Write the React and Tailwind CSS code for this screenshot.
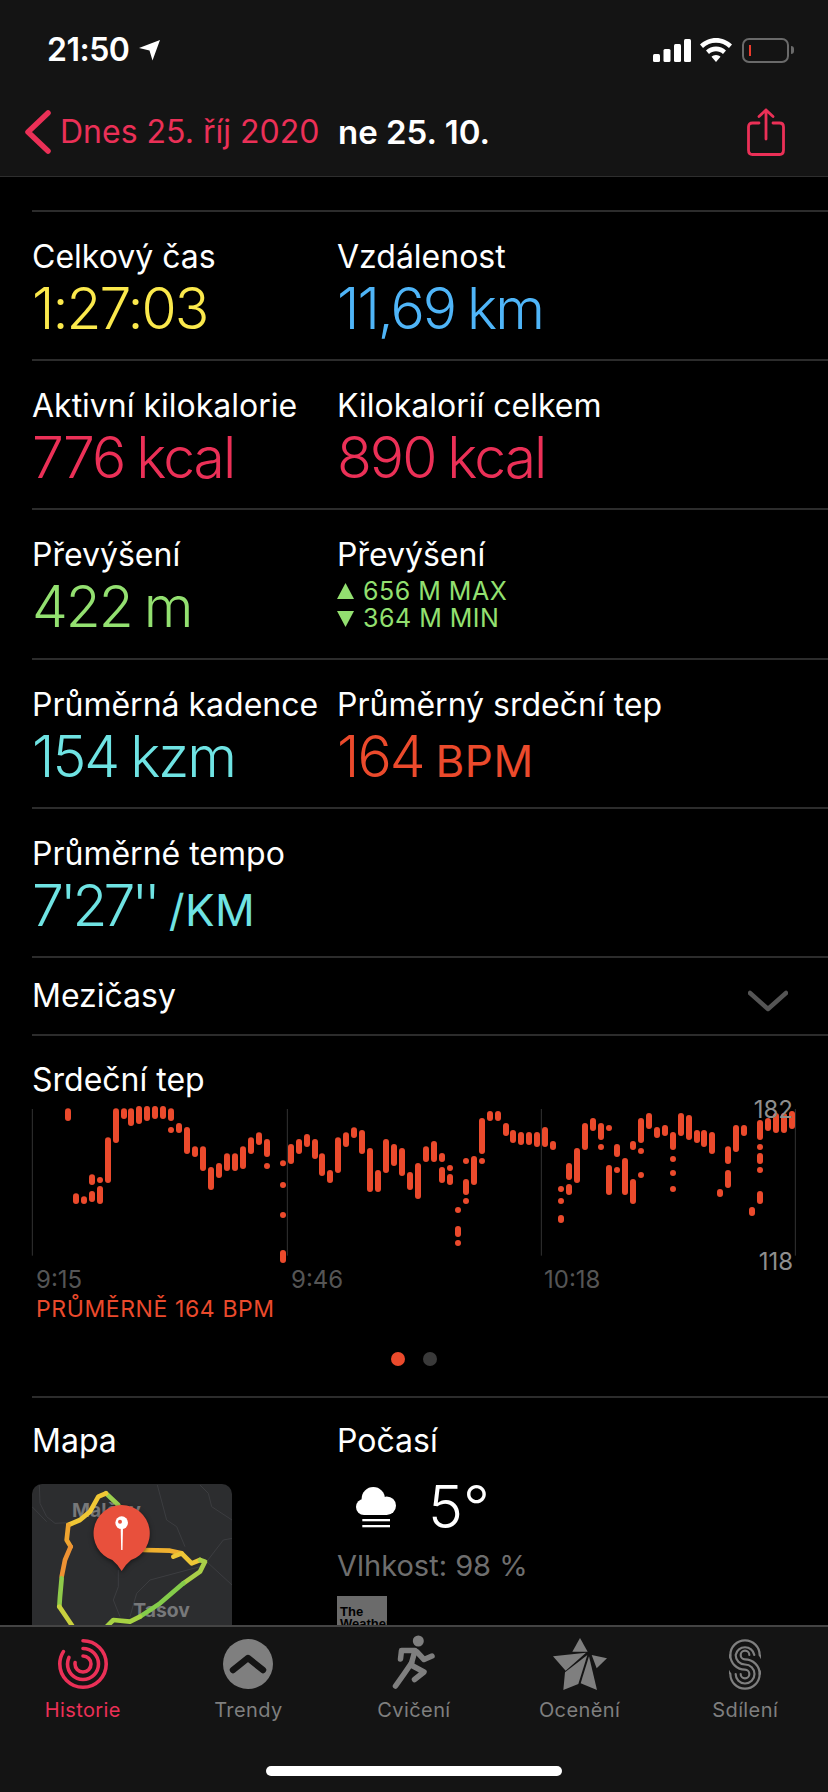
import React from 'react';

const FONT = "font-['Inter','Liberation_Sans',sans-serif]";

// heart rate bars, in 3x coordinates of the page: [x, top, bottom]
const bars = [
  [204,148,186],[228,403,435],[252,412,435],[276,346,378],[276,396,429],[300,354,372],[300,381,435],
  [324,235,372],[348,148,252],[372,148,180],[393,148,201],[417,141,195],[441,141,186],[465,141,180],
  [489,141,180],[513,148,186],[513,204,222],[537,192,222],[561,204,285],[585,262,294],[609,262,336],
  [633,324,393],[657,312,357],[681,283,336],[705,283,336],[729,262,330],[753,235,285],[777,220,258],
  [801,240,294],[801,312,330],[849,304,322],[849,369,387],[849,459,477],[849,573,612],[873,255,315],
  [897,240,285],[921,225,264],[945,240,300],[966,283,351],[990,333,372],[1014,235,342],[1038,220,264],
  [1062,205,237],[1086,213,285],[1110,267,399],[1134,333,399],[1158,240,342],[1182,255,321],[1206,267,351],
  [1230,339,393],
  [1254,312,420],[1278,262,309],[1302,246,309],[1326,282,309],[1326,324,372],[1350,318,336],[1350,345,378],
  [1374,444,462],[1374,501,534],[1374,543,561],[1398,297,315],[1398,360,408],[1398,417,435],[1422,291,378],
  [1446,177,285],[1446,297,315],[1470,156,186],[1494,156,186],[1518,192,231],[1539,213,252],[1563,219,258],
  [1587,219,258],[1611,219,264],[1635,204,264],[1659,246,273],[1683,381,399],[1683,417,435],[1683,468,492],
  [1707,312,363],[1707,375,408],[1731,267,372],[1755,192,273],[1779,177,216],[1803,192,243],[1803,255,273],
  [1827,198,216],[1827,318,408],[1851,255,294],[1851,324,342],[1875,297,408],[1899,246,273],[1899,360,435],
  [1923,177,252],[1923,267,285],[1923,339,357],[1947,162,210],[1971,204,237],[1995,198,231],[2019,219,273],
  [2019,291,309],[2019,333,351],[2019,381,399],[2043,162,231],[2067,168,243],[2091,213,252],[2112,213,264],
  [2136,219,285],[2160,390,414],[2184,262,315],[2184,333,387],[2208,198,279],[2232,198,231],[2256,444,471],
  [2280,183,243],[2280,255,273],[2280,282,315],[2280,324,342],[2280,396,435],[2304,177,216],[2328,162,222],
  [2352,162,222],[2376,156,210],
];

const HeartChart = () => (
  <svg viewBox="0 120 2484 495" className="block w-[828px] h-[165px]">
    {[97, 862, 1624, 2386].map((x) => (
      <line key={x} x1={x} x2={x} y1="150" y2="590" stroke="#333" strokeWidth="3" />
    ))}
    {bars.map(([x, top, bottom], i) => (
      <rect key={i} x={x - 9} y={top} width="18" height={bottom - top} rx="9" fill="#eb4a2c" />
    ))}
  </svg>
);

const Row = ({ children, tall }) => (
  <div className={`flex ml-8 border-t-2 border-[#2c2c2c] ${tall ? 'h-[150px]' : 'h-[149px]'}`}>{children}</div>
);

const Stat = ({ label, children, className }) => (
  <div className="w-[305px] pt-[26px] shrink-0">
    <div className="text-[32px] leading-[38px] text-white whitespace-nowrap">{label}</div>
    <div className={`mt-[3px] h-[60px] flex items-baseline text-[57px] leading-[60px] font-light tracking-[-2px] [word-spacing:-2px] whitespace-nowrap ${className}`}>
      {children}
    </div>
  </div>
);

const Unit = ({ children }) => <span className="ml-3 text-[44px] font-normal tracking-[0.5px]">{children}</span>;

const Triangle = ({ down }) => (
  <svg viewBox="0 0 17 17" className="w-[17px] h-[17px] mr-[9px] fill-[#93e070]">
    <path d={down ? 'M0 1h17L8.5 17z' : 'M8.5 0L17 16H0z'} />
  </svg>
);

const MapThumb = () => (
  <div className="relative mt-[24px] ml-8 w-[200px] h-[200px] rounded-[10px] bg-[#2c2d2f] overflow-hidden">
    <svg viewBox="96 282 600 600" className="w-full h-full">
      <g fill="none" stroke="#3c3d40" strokeWidth="3">
        <path d="M118 285L120 340L140 380L165 400L205 398" />
        <path d="M96 350L140 395" />
        <path d="M472 285L500 390L530 410L555 470" />
        <path d="M600 285L625 310L635 350L696 390" />
        <path d="M696 445L670 450L620 515L696 585" />
        <path d="M355 540L355 590L340 630L360 680" />
        <path d="M600 530L450 570L410 610L390 680" />
      </g>
      <g fontFamily="Inter" fontWeight="700" fontSize="58" fill="#77787a">
        <text x="216" y="382">Malčov</text>
        <text x="400" y="680">Tasov</text>
      </g>
      <g fill="none" strokeWidth="14" strokeLinecap="round" strokeLinejoin="round">
        <path d="M318 310L355 345" stroke="#9ccf4e" />
        <path d="M318 310L295 320L270 365L240 390L205 405" stroke="#f0c735" />
        <path d="M205 405L200 450L212 470" stroke="#efa42f" />
        <path d="M212 470L195 510L185 560" stroke="#ee9233" />
        <path d="M185 565L180 620L178 650" stroke="#8fca4a" />
        <path d="M178 650L205 690L225 720" stroke="#c9d13e" />
        <path d="M430 480L510 482L545 490" stroke="#efb02f" />
        <path d="M520 500L545 490L575 520L600 510" stroke="#eec636" />
        <path d="M600 510L615 515L600 545L550 580" stroke="#a9cf48" />
        <path d="M550 580L480 640L420 680" stroke="#84cc4a" />
        <path d="M420 680L390 695L340 690L310 720" stroke="#a6d243" />
      </g>
      <g className="drop-shadow-[0_5px_8px_rgba(0,0,0,0.5)]">
        <path d="M365 345a85 85 0 0 1 28 165Q378 522 365 543Q352 522 337 510A85 85 0 0 1 365 345z" fill="#e8503c" />
        <path d="M362 410h7l-1.500 70h-4z" fill="#fff" />
        <circle cx="365" cy="398" r="19" fill="#fff" />
        <circle cx="360" cy="395" r="6" fill="#e8503c" />
      </g>
    </svg>
  </div>
);

const Weather = () => (
  <div className="flex-1 pl-[1px]">
    <div className="flex items-center h-[60px] mt-[17px]">
      <svg viewBox="0 0 40 41" className="ml-[19px] w-10 h-[41px] fill-white">
        <circle cx="17.300" cy="11.700" r="11.700" />
        <circle cx="30.700" cy="18.700" r="9.300" />
        <circle cx="8" cy="20" r="8" />
        <rect x="8" y="16" width="23" height="12" />
        <rect x="6.300" y="32" width="27.700" height="2.300" />
        <rect x="6.300" y="38" width="27.700" height="2.300" />
      </svg>
      <span className="ml-[32px] text-[59px] leading-[60px] font-light text-white">5°</span>
    </div>
    <div className="mt-[12px] text-[29px] leading-[34px] text-[#6e6e6e]">Vlhkost: 98 %</div>
    <div className="mt-[13px] w-[50px] h-[60px] bg-[#6b6b6b] px-[3px] pt-[10px] font-['Liberation_Sans',sans-serif] text-[13px] leading-[12px] font-bold text-black">
      The Weather
    </div>
  </div>
);

const RunIcon = () => (
  <svg viewBox="0 0 80 70" className="w-[80px] h-[70px]">
    <circle cx="44.300" cy="12" r="5.500" fill="#7f7f7f" />
    <g fill="none" stroke="#7f7f7f" strokeWidth="5.500" strokeLinecap="round" strokeLinejoin="round">
      <path d="M26.500 30L27.500 21.500H41L37 36L50 43L40.500 50.500" />
      <path d="M37.500 34L30 45L21.500 57" />
      <path d="M43 23L50 30.500L58 27" />
    </g>
  </svg>
);

const Tab = ({ label, active, children }) => (
  <div className="flex flex-col items-center">
    <div className="h-[70px] flex items-center justify-center">{children}</div>
    <div className={`mt-[-1px] text-[20px] leading-[24px] tracking-[0.4px] ${active ? 'text-[#eb3057]' : 'text-[#7f7f7f]'}`}>
      {label}
    </div>
  </div>
);

const RingsIcon = () => (
  <svg viewBox="0 0 50 50" className="w-[50px] h-[50px] -rotate-90" fill="none" stroke="#eb3057" strokeWidth="3.600" strokeLinecap="round">
    <circle cx="25" cy="25" r="23.200" pathLength="100" strokeDasharray="84 100" />
    <circle cx="25" cy="25" r="15.500" pathLength="100" strokeDasharray="82 100" />
    <circle cx="25" cy="25" r="8" pathLength="100" strokeDasharray="78 100" />
  </svg>
);

const TrendIcon = () => (
  <svg viewBox="0 0 50 50" className="w-[50px] h-[50px]">
    <circle cx="25" cy="25" r="25" fill="#7f7f7f" />
    <path d="M10 31L25 19L40 31" fill="none" stroke="#141414" strokeWidth="6.500" strokeLinecap="round" strokeLinejoin="round" />
  </svg>
);

const StarIcon = () => (
  <svg viewBox="414 57 162 156" className="w-[54px] h-[52px] fill-[#7f7f7f]">
    <polygon points="495,57 518,98 472,98" />
    <polygon points="414,112 513,101 452,155" />
    <polygon points="445,213 450,160 517,108 490,195" />
    <polygon points="522,112 546,213 497,193" />
    <polygon points="530,108 576,118 545,148" />
  </svg>
);

const ShareRingIcon = () => (
  <svg viewBox="942 55 96 153" className="w-8 h-[51px]" fill="none" stroke="#7f7f7f" strokeWidth="6.500" strokeLinecap="round">
    <path d="M1034 160A44 44 0 0 0 1034 103A44 44 0 0 0 990 59A44 44 0 0 0 990 147A13 13 0 0 1 990 173A13 13 0 0 1 977 160" />
    <path d="M1018 103A28.500 28.500 0 0 0 962 103A28.500 28.500 0 0 0 990 131.500A28.500 28.500 0 0 1 990 188.500A28.500 28.500 0 0 1 962 160" />
    <path d="M1003 103A13 13 0 0 0 977 103A13 13 0 0 0 990 116A44 44 0 0 1 990 204A44 44 0 0 1 946 160A44 44 0 0 1 946 103" />
  </svg>
);

export default function App() {
  return (
    <div className={`${FONT} w-[828px] h-[1792px] flex flex-col bg-black overflow-hidden`}>
      <header className="h-[177px] shrink-0 bg-[#141414] border-b border-[#2e2e2e]">
        <div className="h-[100px] flex items-center pl-[47px] pr-[34px] text-white">
          <span className="text-[32px] font-semibold leading-none tracking-[-0.5px]">21:50</span>
          <svg viewBox="0 0 21 21" className="ml-[10px] w-[21px] h-[21px] fill-white">
            <path d="M21 0L13.500 20.500L10.500 10.500L0 8z" />
          </svg>
          <div className="ml-auto flex items-center">
            <svg viewBox="0 0 38 23" className="w-[38px] h-[23px] fill-white">
              <rect x="0" y="15" width="7" height="8" rx="1.500" />
              <rect x="10.500" y="10" width="7" height="13" rx="1.500" />
              <rect x="21" y="5" width="7" height="18" rx="1.500" />
              <rect x="31" y="0" width="7" height="23" rx="1.500" />
            </svg>
            <svg viewBox="0 0 32 24" className="ml-[9px] w-8 h-6 fill-white">
              <path d="M16 0C22 0 27.600 2.400 32 6.500L29 10C25.500 6.700 21 4.800 16 4.800S6.500 6.700 3 10L0 6.500C4.400 2.400 10 0 16 0z" />
              <path d="M16 8.500C19.800 8.500 23.300 10 26 12.500L23 16C21.100 14.300 18.700 13.300 16 13.300S10.900 14.300 9 16L6 12.500C8.700 10 12.200 8.500 16 8.500z" />
              <path d="M16 17C17.800 17 19.300 17.700 20.500 18.800L16 24L11.500 18.800C12.700 17.700 14.200 17 16 17z" />
            </svg>
            <div className="ml-[10px] w-[47px] h-[25px] rounded-[7px] border-2 border-[#6a6a6a] p-[5px]">
              <div className="w-[2px] h-[11px] bg-[#eb3b2c]" />
            </div>
            <div className="ml-[2px] w-[3px] h-2 rounded-r-full bg-[#6a6a6a]" />
          </div>
        </div>
        <div className="h-[64px] flex items-center pl-[25px] pr-[43px]">
          <svg viewBox="0 0 26 44" className="w-[26px] h-[44px]" fill="none" stroke="#eb3057" strokeWidth="5.500" strokeLinecap="round" strokeLinejoin="round">
            <path d="M23 3L3 22L23 41" />
          </svg>
          <span className="ml-[9px] w-[278px] text-[32px] leading-none whitespace-nowrap text-[#eb3057]">Dnes 25. říj 2020</span>
          <span className="text-[33px] leading-none font-semibold text-white">ne 25. 10.</span>
          <svg viewBox="0 0 38 48" className="ml-auto w-[38px] h-[48px]" fill="none" stroke="#eb3057" strokeWidth="2.800" strokeLinecap="round" strokeLinejoin="round">
            <path d="M19 31V2M12 8.500L19 2L26 8.500" />
            <path d="M12 15H5.500Q1.500 15 1.500 19V42Q1.500 46.500 5.500 46.500H32.500Q36.500 46.500 36.500 42V19Q36.500 15 32.500 15H26" />
          </svg>
        </div>
      </header>

      <main className="flex-1 min-h-0 overflow-hidden pt-[33px]">
        <Row>
          <Stat label="Celkový čas" className="text-[#fbe94c]">1:27:03</Stat>
          <Stat label="Vzdálenost" className="text-[#4fb5f8]">11,69 km</Stat>
        </Row>
        <Row>
          <Stat label="Aktivní kilokalorie" className="text-[#eb3057]">776 kcal</Stat>
          <Stat label="Kilokalorií celkem" className="text-[#eb3057]">890 kcal</Stat>
        </Row>
        <Row tall>
          <Stat label="Převýšení" className="text-[#93e070]">422 m</Stat>
          <div className="pt-[26px]">
            <div className="text-[32px] leading-[38px] text-white">Převýšení</div>
            <div className="mt-[4px] text-[25px] leading-[27px] tracking-[0.5px] text-[#93e070]">
              <div className="flex items-center"><Triangle />656 M MAX</div>
              <div className="flex items-center"><Triangle down />364 M MIN</div>
            </div>
          </div>
        </Row>
        <Row>
          <Stat label="Průměrná kadence" className="text-[#6fe3e3]">154 kzm</Stat>
          <Stat label="Průměrný srdeční tep" className="text-[#eb4a2c]">164<Unit>BPM</Unit></Stat>
        </Row>
        <Row>
          <Stat label="Průměrné tempo" className="text-[#6fe3e3]">
            <span className="tracking-[-4px]">7'27''</span><Unit>/KM</Unit>
          </Stat>
        </Row>
        <div className="h-[78px] ml-8 pr-[40px] border-t-2 border-[#2c2c2c] flex items-center justify-between">
          <span className="text-[32px] text-white">Mezičasy</span>
          <svg viewBox="0 0 40 22" className="mt-[10px] w-10 h-[22px]" fill="none" stroke="#555" strokeWidth="4.500" strokeLinecap="round" strokeLinejoin="round">
            <path d="M2 3L20 19L38 3" />
          </svg>
        </div>

        <section>
          <div className="ml-8 border-t-2 border-[#2c2c2c] pt-[25px] text-[32px] leading-[38px] text-white">Srdeční tep</div>
          <div className="relative">
            <HeartChart />
            <span className="absolute right-[35px] top-[-3px] text-[24px] leading-[28px] text-[#8e8e8e]">182</span>
            <span className="absolute right-[35px] top-[149px] text-[24px] leading-[28px] text-[#8e8e8e]">118</span>
          </div>
          <div className="mt-[1px] flex h-[30px] pl-[36px] items-center text-[24px] leading-[30px] text-[#555]">
            <span className="w-[255px]">9:15</span>
            <span className="w-[253px]">9:46</span>
            <span>10:18</span>
          </div>
          <div className="pl-[36px] text-[23px] leading-[28px] tracking-[0.6px] text-[#eb4a2c]">PRŮMĚRNĚ 164 BPM</div>
          <div className="mt-[29px] flex justify-center gap-[18px]">
            <div className="w-[14px] h-[14px] rounded-full bg-[#eb4a2c]" />
            <div className="w-[14px] h-[14px] rounded-full bg-[#3a3a3a]" />
          </div>
        </section>

        <div className="mt-[30px] ml-8 border-t-2 border-[#2c2c2c] flex pt-[24px]">
          <div className="w-[305px] text-[32px] leading-[38px] text-white">Mapa</div>
          <div className="text-[32px] leading-[38px] text-white">Počasí</div>
        </div>
        <div className="flex">
          <div className="w-[336px]"><MapThumb /></div>
          <Weather />
        </div>
      </main>

      <nav className="relative h-[167px] shrink-0 bg-[#141414] border-t-2 border-[#444]">
        <div className="grid grid-cols-5 pt-[2px]">
          <Tab label="Historie" active><RingsIcon /></Tab>
          <Tab label="Trendy"><TrendIcon /></Tab>
          <Tab label="Cvičení"><RunIcon /></Tab>
          <Tab label="Ocenění"><StarIcon /></Tab>
          <Tab label="Sdílení"><ShareRingIcon /></Tab>
        </div>
        <div className="absolute bottom-[16px] left-[266px] w-[296px] h-[10px] rounded-full bg-white" />
      </nav>
    </div>
  );
}
